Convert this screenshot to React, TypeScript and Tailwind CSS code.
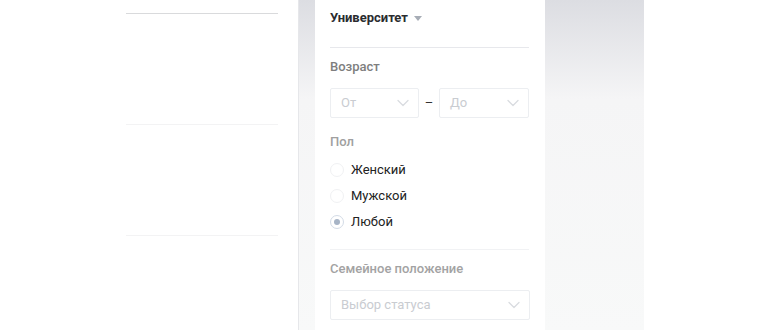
import React from "react";

const Chevron = () => (
  <svg width="12" height="8" viewBox="0 0 12 8" fill="none" className="shrink-0">
    <path d="M1 1.5l5 5 5-5" stroke="#d9dce0" strokeWidth="1.3" strokeLinecap="round" strokeLinejoin="round" />
  </svg>
);

const SelectBox = ({ placeholder, className }: { placeholder: string; className?: string }) => (
  <div
    className={`h-[30px] border border-[#eceef1] rounded-[2px] flex items-center justify-between pl-[10px] pr-[9px] ${className || ""}`}
  >
    <span className="text-[13px] text-[#c9ccd1]">{placeholder}</span>
    <Chevron />
  </div>
);

const Radio = ({ label, checked }: { label: string; checked?: boolean }) => (
  <label className="h-[26px] flex items-center gap-[7px]">
    <span
      className={`w-[14px] h-[14px] rounded-full border flex items-center justify-center ${
        checked ? "border-[#d3dbe6]" : "border-[#f0f1f3]"
      }`}
    >
      {checked && <span className="w-[6px] h-[6px] rounded-full bg-[#a7b4c6]" />}
    </span>
    <span className="text-[13px] text-[#222]">{label}</span>
  </label>
);

const App = () => {
  return (
    <div
      className="w-[770px] h-[330px] flex bg-white overflow-hidden"
      style={{ fontFamily: "Roboto, 'Noto Sans', Arial, sans-serif" }}
    >
      <div className="w-[298px] pl-[126px] pr-[20px]">
        <div className="mt-[13px] h-px bg-[#d9dadc]" />
        <div className="mt-[110px] h-px bg-[#f3f3f4]" />
        <div className="mt-[110px] h-px bg-[#f3f3f4]" />
      </div>

      <div className="w-[346px] h-full pl-[16px] pr-[100px] bg-gradient-to-b from-[#dcdde2] via-[#f5f5f6] via-30% to-[#f8f9f9] border-l border-[#e6e7ea]">
        <div className="w-[230px] h-full bg-white pl-[15px] pr-[16px]">
          <div className="h-[47px] pt-[9px] flex items-start gap-[6px]">
            <span className="text-[13px] font-bold text-[#2a2c2f] leading-[18px]">Университет</span>
            <svg width="8" height="5" viewBox="0 0 8 5" className="mt-[7px]">
              <path d="M0 0h8L4 5z" fill="#a7adb6" />
            </svg>
          </div>
          <div className="h-px bg-[#e7e8ec]" />

          <div className="mt-[10px] text-[13px] font-medium text-[#7e7e7e] leading-[18px]">Возраст</div>
          <div className="mt-[12px] flex items-center">
            <SelectBox placeholder="От" className="w-[89px]" />
            <span className="w-[20px] text-center text-[13px] text-[#333]">–</span>
            <SelectBox placeholder="До" className="w-[90px]" />
          </div>

          <div className="mt-[15px] text-[13px] font-medium text-[#a0a0a0] leading-[18px]">Пол</div>
          <div className="mt-[6px] flex flex-col">
            <Radio label="Женский" />
            <Radio label="Мужской" />
            <Radio label="Любой" checked />
          </div>
          <div className="mt-[14px] h-px bg-[#f1f2f4]" />

          <div className="mt-[10px] text-[13px] font-medium text-[#a3a3a3] leading-[18px]">Семейное положение</div>
          <SelectBox placeholder="Выбор статуса" className="mt-[12px] w-[200px]" />
        </div>
      </div>

      <div className="flex-1" />
    </div>
  );
};

export default App;
